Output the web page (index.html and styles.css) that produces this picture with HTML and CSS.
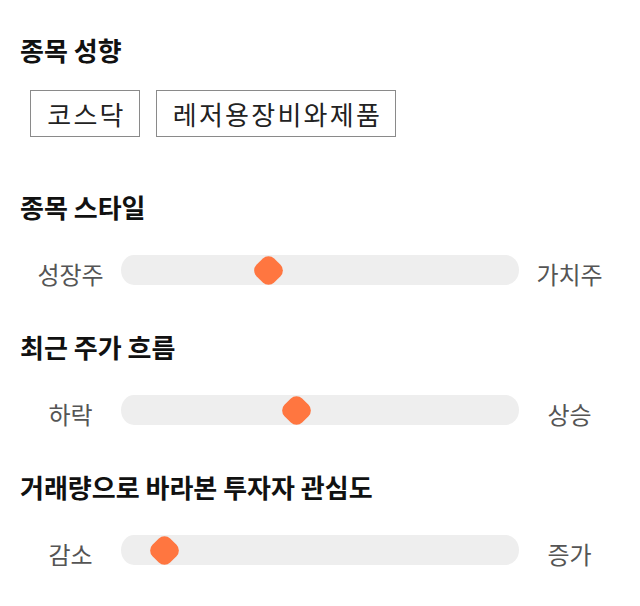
FILE: index.html
```html
<!DOCTYPE html>
<html>
    <head>
        <title>종목 분석</title>
        <link rel="stylesheet" href="styles.css">
    </head>
    <body>
        <div class="panel">
            <section class="group group-tags">
                <h2 class="group-title">종목 성향</h2>
                <div class="tags">
                    <span class="tag">코스닥</span>
                    <span class="tag">레저용장비와제품</span>
                </div>
            </section>

            <section class="group">
                <h2 class="group-title">종목 스타일</h2>
                <div class="scale">
                    <span class="scale-label">성장주</span>
                    <div class="scale-track"><span class="scale-thumb" style="left: 37%"></span></div>
                    <span class="scale-label">가치주</span>
                </div>
            </section>

            <section class="group">
                <h2 class="group-title">최근 주가 흐름</h2>
                <div class="scale">
                    <span class="scale-label">하락</span>
                    <div class="scale-track"><span class="scale-thumb" style="left: 44%"></span></div>
                    <span class="scale-label">상승</span>
                </div>
            </section>

            <section class="group">
                <h2 class="group-title">거래량으로 바라본 투자자 관심도</h2>
                <div class="scale">
                    <span class="scale-label">감소</span>
                    <div class="scale-track"><span class="scale-thumb" style="left: 11%"></span></div>
                    <span class="scale-label">증가</span>
                </div>
            </section>
        </div>
    </body>
</html>
```

FILE: styles.css
```css
body {
	margin: 0;
	background-color: #fff;
	color: #111;
	font-family: "Noto Sans CJK KR", "Noto Sans", sans-serif;
}

.panel {
	padding: 34px 20px 0 20px;
}

.group {
	margin-bottom: 46px;
}

.group-tags {
	margin-bottom: 54px;
}

.group-title {
	margin: 0 0 32px 0;
	font-size: 26px;
	line-height: 32px;
	font-weight: 700;
	color: #111;
}

.group-tags .group-title {
	margin-bottom: 24px;
}

.tags {
	display: flex;
	gap: 16px;
	padding-left: 10px;
}

.tag {
	border: 1px solid #8a8a8a;
	padding: 0 12.75px 0 16.25px;
	font-size: 26px;
	letter-spacing: 2.25px;
	line-height: 45px;
	color: #222;
}

.scale {
	display: flex;
	align-items: center;
	height: 30px;
}

.scale-label {
	width: 101px;
	flex: none;
	padding-top: 7px;
	text-align: center;
	font-size: 24px;
	line-height: 24px;
	color: #555;
}

.scale-track {
	flex: 1;
	position: relative;
	height: 30px;
	background-color: #eee;
	border-radius: 13px / 15px;
}

.scale-thumb {
	position: absolute;
	top: 2.5px;
	width: 25px;
	height: 25px;
	margin-left: -12.5px;
	background-color: #ff7640;
	border-radius: 8px;
	transform: rotate(45deg);
}
```
